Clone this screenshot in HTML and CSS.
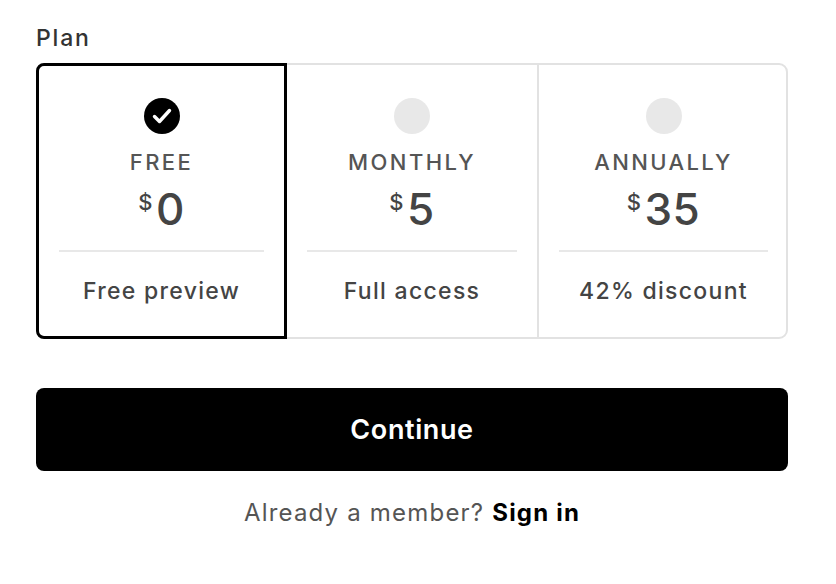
FILE: index.html
```html
<!DOCTYPE html>
<html>
<head>
<meta charset="utf-8">
<link rel="stylesheet" href="styles.css">
</head>
<body>
<div class="wrap">
  <div class="label">Plan</div>
  <div class="plans">
    <div class="plan selected">
      <div class="mark check">
        <svg viewBox="0 0 36 36" width="36" height="36"><circle cx="18" cy="18" r="18" fill="#000"/><path d="M10.5 18.5 L15.5 23.5 L25.5 12.5" fill="none" stroke="#fff" stroke-width="3.4" stroke-linecap="round" stroke-linejoin="round"/></svg>
      </div>
      <div class="name">FREE</div>
      <div class="price"><span class="cur">$</span>0</div>
      <div class="desc">Free preview</div>
    </div>
    <div class="plan">
      <div class="mark"><span class="dot"></span></div>
      <div class="name">MONTHLY</div>
      <div class="price"><span class="cur">$</span>5</div>
      <div class="desc">Full access</div>
    </div>
    <div class="plan">
      <div class="mark"><span class="dot"></span></div>
      <div class="name">ANNUALLY</div>
      <div class="price"><span class="cur">$</span>35</div>
      <div class="desc">42% discount</div>
    </div>
  </div>
  <button class="continue">Continue</button>
  <p class="signin">Already a member? <a href="#">Sign in</a></p>
</div>
</body>
</html>
```
FILE: styles.css
```css
* { box-sizing: border-box; }
html, body { margin: 0; padding: 0; background: #fff; }
body { font-family: Inter, "Noto Sans", sans-serif; color: #444; }
.wrap { width: 752px; margin: 0 0 0 36px; padding-top: 24px; }
.label { font-size: 23px; line-height: 28px; letter-spacing: 1.8px; color: #333; font-weight: 500; }
.plans {
  margin-top: 11px;
  display: grid;
  grid-template-columns: 249px 250px 249px;
  border: 2px solid #e2e2e2;
  border-radius: 9px;
  height: 276px;
}
.plan {
  display: flex; flex-direction: column; align-items: center;
  margin: -2px 0;
  padding-top: 35px;
  border-left: 2px solid #e2e2e2;
}
.plan:first-child { margin-left: -2px; border-left: none; }
.plan:last-child { margin-right: -2px; }
.plan.selected {
  border: 3px solid #000;
  border-radius: 8px 0 0 8px;
  padding-top: 32px;
}
.plan.selected + .plan { border-left: none; }
.mark { width: 36px; height: 36px; }
.mark svg { display: block; }
.dot { display: block; width: 36px; height: 36px; border-radius: 50%; background: #e8e8e8; }
.name { margin-top: 14px; font-size: 22px; line-height: 28px; letter-spacing: 2.4px; color: #555; font-weight: 500; }
.price { margin-top: 4px; font-size: 44px; line-height: 44px; letter-spacing: 0.5px; font-weight: 500; color: #444; }
.cur { font-size: 22px; vertical-align: 15px; margin-right: 3px; }
.desc {
  align-self: stretch;
  margin: 19px 20px 0;
  border-top: 2px solid #e8e8e8;
  padding-top: 25px;
  text-align: center;
  font-size: 23px; line-height: 28px; letter-spacing: 1.3px; color: #444; font-weight: 500;
}
.continue {
  display: block; width: 100%; margin-top: 49px; height: 83px;
  background: #000; color: #fff; border: none; border-radius: 8px;
  font-family: inherit; font-size: 27px; letter-spacing: 0.6px; font-weight: 600;
}
.signin { margin: 27px 0 0; text-align: center; font-size: 24px; line-height: 30px; letter-spacing: 1.2px; color: #555; }
.signin a { color: #000; font-weight: 700; text-decoration: none; }
```
